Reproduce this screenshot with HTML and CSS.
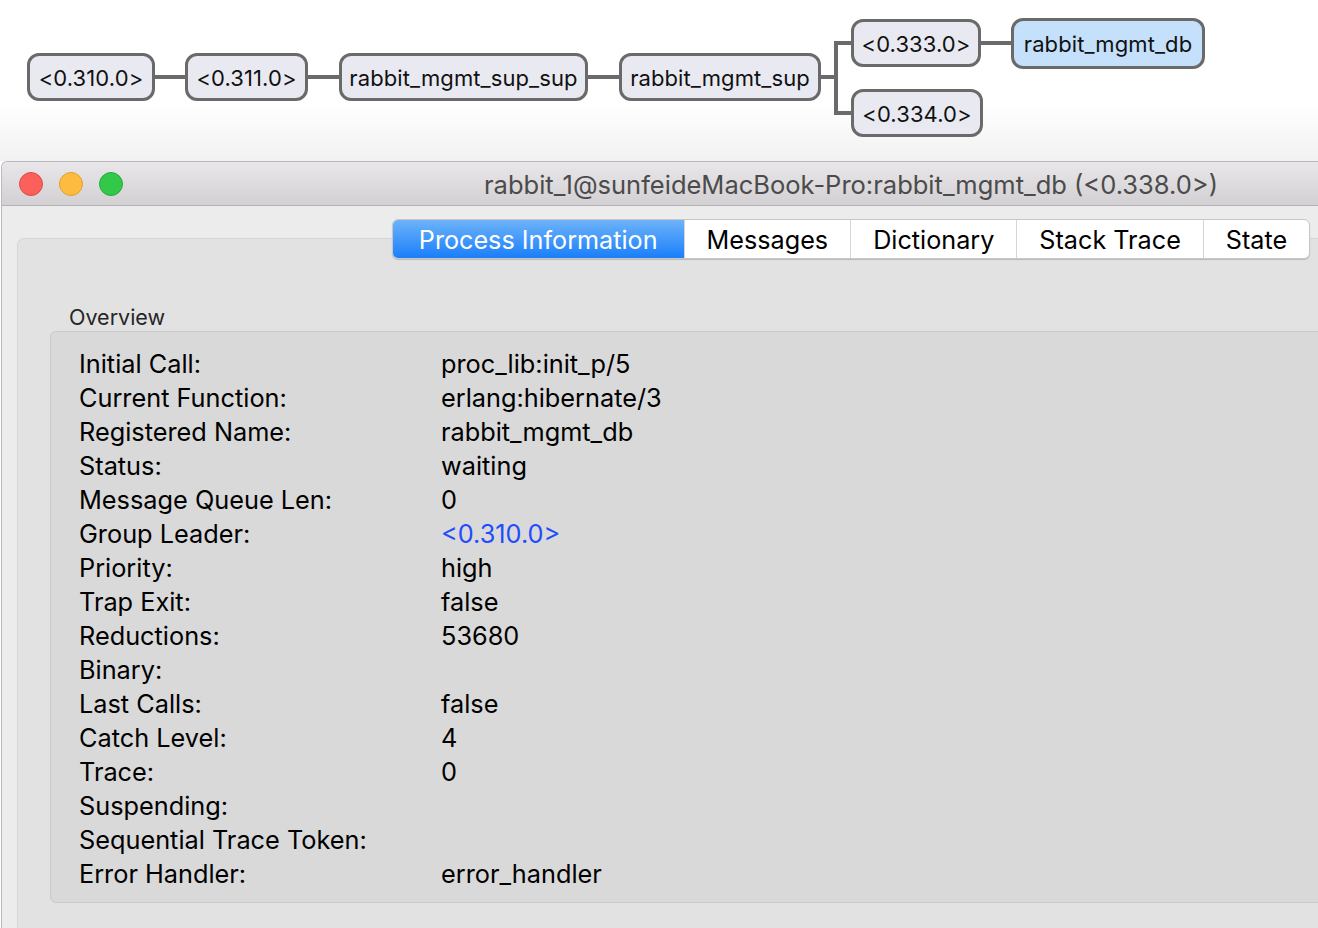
FILE: index.html
```html
<!DOCTYPE html>
<html>
<head>
<meta charset="utf-8">
<link rel="stylesheet" href="styles.css">
</head>
<body>
<div class="page">
  <div class="tree">
    <svg class="links" width="1318" height="160" viewBox="0 0 1318 160">
      <g stroke="#6a6a6a" stroke-width="4" fill="none">
        <line x1="154" y1="77" x2="186" y2="77"/>
        <line x1="307" y1="77" x2="340" y2="77"/>
        <line x1="587" y1="77" x2="620" y2="77"/>
        <line x1="820" y1="77" x2="836" y2="77"/>
        <polyline points="852,43 836,43 836,113 852,113"/>
        <line x1="980" y1="43" x2="1012" y2="43"/>
      </g>
    </svg>
    <div class="node" style="left:27px;top:53px;width:128px">&lt;0.310.0&gt;</div>
    <div class="node" style="left:185px;top:53px;width:123px">&lt;0.311.0&gt;</div>
    <div class="node" style="left:339px;top:53px;width:249px">rabbit_mgmt_sup_sup</div>
    <div class="node" style="left:619px;top:53px;width:202px">rabbit_mgmt_sup</div>
    <div class="node" style="left:851px;top:19px;width:130px">&lt;0.333.0&gt;</div>
    <div class="node selected" style="left:1011px;top:18px;width:194px;height:51px">rabbit_mgmt_db</div>
    <div class="node" style="left:851px;top:89px;width:132px">&lt;0.334.0&gt;</div>
  </div>

  <div class="window">
    <div class="titlebar">
      <div class="lights">
        <span class="light red"></span>
        <span class="light yellow"></span>
        <span class="light green"></span>
      </div>
      <div class="title">rabbit_1@sunfeideMacBook-Pro:rabbit_mgmt_db (&lt;0.338.0&gt;)</div>
    </div>
    <div class="content">
      <div class="tabs">
        <div class="tab active">Process Information</div>
        <div class="tab">Messages</div>
        <div class="tab">Dictionary</div>
        <div class="tab">Stack Trace</div>
        <div class="tab">State</div>
      </div>
      <div class="tabbox">
        <div class="group-label">Overview</div>
        <div class="group">
          <div class="row"><span class="k">Initial Call:</span><span class="v">proc_lib:init_p/5</span></div>
          <div class="row"><span class="k">Current Function:</span><span class="v">erlang:hibernate/3</span></div>
          <div class="row"><span class="k">Registered Name:</span><span class="v">rabbit_mgmt_db</span></div>
          <div class="row"><span class="k">Status:</span><span class="v">waiting</span></div>
          <div class="row"><span class="k">Message Queue Len:</span><span class="v">0</span></div>
          <div class="row"><span class="k">Group Leader:</span><span class="v link">&lt;0.310.0&gt;</span></div>
          <div class="row"><span class="k">Priority:</span><span class="v">high</span></div>
          <div class="row"><span class="k">Trap Exit:</span><span class="v">false</span></div>
          <div class="row"><span class="k">Reductions:</span><span class="v">53680</span></div>
          <div class="row"><span class="k">Binary:</span><span class="v"></span></div>
          <div class="row"><span class="k">Last Calls:</span><span class="v">false</span></div>
          <div class="row"><span class="k">Catch Level:</span><span class="v">4</span></div>
          <div class="row"><span class="k">Trace:</span><span class="v">0</span></div>
          <div class="row"><span class="k">Suspending:</span><span class="v"></span></div>
          <div class="row"><span class="k">Sequential Trace Token:</span><span class="v"></span></div>
          <div class="row"><span class="k">Error Handler:</span><span class="v">error_handler</span></div>
        </div>
      </div>
    </div>
  </div>
</div>
</body>
</html>
```

FILE: styles.css
```css
html, body {
  margin: 0;
  padding: 0;
  width: 1318px;
  height: 928px;
  overflow: hidden;
  background: #ffffff;
}
body {
  font-family: Inter, "Liberation Sans", Arial, sans-serif;
  color: #000;
}
.page {
  width: 1318px;
  height: 928px;
  overflow: hidden;
}
.tree {
  position: relative;
  height: 161px;
  background: linear-gradient(to bottom, #ffffff 0px, #ffffff 105px, #f1f1f1 161px);
}
.links {
  position: absolute;
  left: 0;
  top: 0;
}
.node {
  position: absolute;
  box-sizing: border-box;
  height: 48px;
  border: 3px solid #6a6a6a;
  border-radius: 12px;
  background: #e9e9f1;
  display: flex;
  align-items: center;
  justify-content: center;
  font-size: 22px;
  color: #111;
  letter-spacing: 0.1px;
  padding-top: 1px;
}
.node.selected {
  background: #c4e0fb;
}
.window {
  width: 1700px;
  margin-left: 1px;
  border: 1px solid #b9b9b9;
  border-bottom: none;
  border-radius: 6px 6px 0 0;
  background: #ececec;
  height: 767px;
  box-sizing: border-box;
}
.titlebar {
  position: relative;
  height: 44px;
  box-sizing: border-box;
  border-bottom: 1px solid #b3b3b3;
  border-radius: 6px 6px 0 0;
  background: linear-gradient(to bottom, #e9e7e9, #d2d0d2);
  display: flex;
  align-items: center;
  justify-content: center;
}
.lights {
  position: absolute;
  left: 17px;
  top: 10px;
  display: flex;
  gap: 16px;
}
.light {
  width: 24px;
  height: 24px;
  border-radius: 50%;
  box-sizing: border-box;
}
.light.red { background: #fc605b; border: 1px solid #de4a45; }
.light.yellow { background: #fdbc3f; border: 1px solid #dfa02f; }
.light.green { background: #34c84a; border: 1px solid #28a83a; }
.title {
  font-size: 25.5px;
  color: #4b4b4b;
  padding-top: 2px;
}
.content {
  padding: 13px 15px 0 15px;
}
.tabs {
  position: relative;
  z-index: 1;
  display: flex;
  height: 40px;
  width: max-content;
  margin: 0 auto;
  background: #fff;
  border: 1px solid #c7c7c7;
  border-radius: 6px;
  box-shadow: 0 1px 1px rgba(0,0,0,0.18);
  overflow: hidden;
  box-sizing: border-box;
}
.tab {
  padding: 0 22px;
  font-size: 25.2px;
  display: flex;
  align-items: center;
  border-left: 1px solid #d6d6d6;
  color: #000;
  padding-top: 1px;
}
.tab:first-child { border-left: none; }
.tab.active {
  padding-left: 26px;
  padding-right: 26px;
  color: #fff;
  background: linear-gradient(to bottom, #6db3fa, #1a7ffa);
}
.tabbox {
  margin-top: -21px;
  background: #e2e2e2;
  border: 1px solid #d6d6d6;
  border-bottom: none;
  border-radius: 7px 7px 0 0;
  padding: 66px 33px 0 32px;
  height: 700px;
  box-sizing: border-box;
}
.group-label {
  font-size: 21.5px;
  color: #262626;
  margin-left: 19px;
  line-height: 24px;
  margin-bottom: 2px;
}
.group {
  background: #d9d9d9;
  border: 1px solid #cacaca;
  border-radius: 6px;
  padding: 14px 29px 12px 28px;
}
.row {
  display: flex;
  height: 34px;
  align-items: center;
  font-size: 25.3px;
}
.k {
  width: 362px;
  flex: none;
}
.v.link {
  color: #1f4cff;
}
```
